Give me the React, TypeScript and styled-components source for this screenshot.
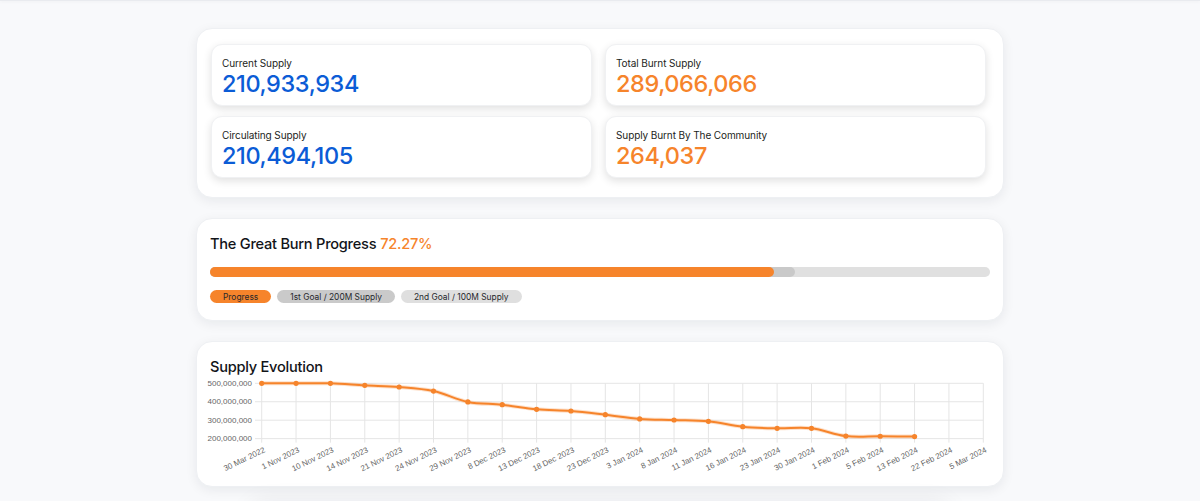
import React from "react";
import styled, { createGlobalStyle } from "styled-components";

const GlobalStyle = createGlobalStyle`
  body {
    margin: 0;
    background: #f8f9fb;
    font-family: Inter, "Noto Sans", "Liberation Sans", sans-serif;
    color: #16181d;
  }
`;

const ORANGE = "#f6842b";
const BLUE = "#0b5cd6";

const TopEdge = styled.div`
  height: 1px;
  background: #e9ebef;
  box-shadow: 0 1px 3px rgba(0, 0, 0, 0.06);
`;

const Page = styled.main`
  width: 808px;
  margin: 0 auto;
  padding-top: 27px;
  display: flex;
  flex-direction: column;
  gap: 20px;
`;

const Card = styled.section`
  background: #fff;
  border-radius: 16px;
  border: 1px solid #eef0f3;
  box-shadow: 0 3px 12px rgba(20, 24, 40, 0.07);
`;

const StatsCard = styled(Card)`
  padding: 15px 17px 19px 14px;
  display: grid;
  grid-template-columns: 1fr 1fr;
  gap: 10px 13px;
`;

const Stat = styled.div`
  background: #fff;
  border-radius: 11px;
  border: 1px solid #f0f1f3;
  box-shadow: 0 3px 9px rgba(0, 0, 0, 0.12);
  padding: 11px 10px 7px 10px;
`;

const StatLabel = styled.div`
  font-size: 10px;
  line-height: 14px;
  letter-spacing: -0.1px;
  color: #1c1e22;
`;

const StatValue = styled.div<{ $tone: "blue" | "orange" }>`
  font-size: 23.5px;
  line-height: 28px;
  font-weight: 500;
  letter-spacing: -0.4px;
  color: ${(p) => (p.$tone === "blue" ? BLUE : ORANGE)};
`;

const ProgressCard = styled(Card)`
  padding: 14px 13px 17px 13px;
`;

const Title = styled.h2`
  margin: 0;
  font-size: 14.6px;
  line-height: 22px;
  font-weight: 500;
  letter-spacing: -0.25px;
  color: #121419;
`;

const Percent = styled.span`
  color: ${ORANGE};
  margin-left: 4px;
`;

const Track = styled.div`
  margin-top: 12px;
  height: 10px;
  border-radius: 5px;
  background: #e0e0e0;
  display: flex;
  overflow: hidden;
`;

const Segment = styled.div<{ $color: string }>`
  height: 100%;
  background: ${(p) => p.$color};
  border-radius: 0 5px 5px 0;
`;

const Legend = styled.div`
  margin-top: 13px;
  display: flex;
  gap: 6px;
`;

const Pill = styled.span<{ $color: string }>`
  display: inline-flex;
  align-items: center;
  height: 13px;
  padding: 0 13px;
  border-radius: 7px;
  background: ${(p) => p.$color};
  font-size: 8.4px;
  color: #26282c;
`;

const ChartCard = styled(Card)`
  padding: 14px 13px 13px 13px;
`;

const ChartSvg = styled.svg`
  display: block;
  overflow: visible;
`;

const NextCard = styled(Card)`
  width: 700px;
  height: 120px;
  margin: 0 auto;
  box-shadow: 0 -4px 24px rgba(20, 24, 40, 0.08);
`;

const stats = [
  { label: "Current Supply", value: "210,933,934", tone: "blue" as const },
  { label: "Total Burnt Supply", value: "289,066,066", tone: "orange" as const },
  { label: "Circulating Supply", value: "210,494,105", tone: "blue" as const },
  { label: "Supply Burnt By The Community", value: "264,037", tone: "orange" as const },
];

const dates = [
  "30 Mar 2022", "1 Nov 2023", "10 Nov 2023", "14 Nov 2023", "21 Nov 2023",
  "24 Nov 2023", "29 Nov 2023", "8 Dec 2023", "13 Dec 2023", "18 Dec 2023",
  "23 Dec 2023", "3 Jan 2024", "8 Jan 2024", "11 Jan 2024", "16 Jan 2024",
  "23 Jan 2024", "30 Jan 2024", "1 Feb 2024", "5 Feb 2024", "13 Feb 2024",
  "22 Feb 2024", "5 Mar 2024",
];

// supply in millions per date (last dates have no reading yet)
const supply = [
  500, 500, 500, 489, 480, 458, 399, 384, 359, 350,
  330, 307, 301, 294, 265, 256, 256, 214, 213, 211,
];

const W = 780;
const H = 95;
const X0 = 51.7;
const X1 = 773.3;
const Y_TOP = 5.3;
const PX_PER_100M = 18.45;

const xAt = (i: number) => X0 + (i * (X1 - X0)) / (dates.length - 1);
const yAt = (v: number) => Y_TOP + ((500 - v) / 100) * PX_PER_100M;
const Y_BOTTOM = yAt(200);

const axisFont = {
  fontSize: 8,
  fontFamily: "'Liberation Sans', Arial, sans-serif",
  fill: "#666",
};

// cardinal spline through the points, same idea as chart.js line tension
function smoothPath(pts: [number, number][], t = 0.35) {
  let d = `M${pts[0][0]},${pts[0][1]}`;
  const ctrl = pts.map((p, i) => {
    const prev = pts[Math.max(0, i - 1)];
    const next = pts[Math.min(pts.length - 1, i + 1)];
    const d01 = Math.hypot(p[0] - prev[0], p[1] - prev[1]);
    const d12 = Math.hypot(next[0] - p[0], next[1] - p[1]);
    const sum = d01 + d12 || 1;
    const fa = (t * d01) / sum;
    const fb = (t * d12) / sum;
    return {
      before: [p[0] - fa * (next[0] - prev[0]), p[1] - fa * (next[1] - prev[1])],
      after: [p[0] + fb * (next[0] - prev[0]), p[1] + fb * (next[1] - prev[1])],
    };
  });
  for (let i = 1; i < pts.length; i++) {
    const a = ctrl[i - 1].after;
    const b = ctrl[i].before;
    d += ` C${a[0]},${a[1]} ${b[0]},${b[1]} ${pts[i][0]},${pts[i][1]}`;
  }
  return d;
}

const SupplyChart: React.FC = () => {
  const pts = supply.map((v, i) => [xAt(i), yAt(v)] as [number, number]);
  const line = smoothPath(pts);
  const ticks = [500, 400, 300, 200];
  return (
    <ChartSvg width={W} height={H} viewBox={`0 0 ${W} ${H}`}>
      {ticks.map((v) => (
        <g key={v}>
          <line x1={45} x2={X1} y1={yAt(v)} y2={yAt(v)} stroke="#e5e5e5" strokeWidth={1} />
          <text x={42} y={yAt(v)} textAnchor="end" dominantBaseline="central" {...axisFont}>
            {`${v},000,000`}
          </text>
        </g>
      ))}
      {dates.map((label, i) => (
        <g key={label}>
          <line x1={xAt(i)} x2={xAt(i)} y1={Y_TOP} y2={Y_BOTTOM + 4} stroke="#e5e5e5" strokeWidth={1} />
          <text
            transform={`translate(${xAt(i) + 1.5},${Y_BOTTOM + 8}) rotate(-26)`}
            textAnchor="end"
            dominantBaseline="hanging"
            {...axisFont}
          >
            {label}
          </text>
        </g>
      ))}
      <path d={line} fill="none" stroke="rgba(246,132,43,0.25)" strokeWidth={4} />
      <path d={line} fill="none" stroke={ORANGE} strokeWidth={2} />
      {pts.map(([x, y], i) => (
        <circle key={i} cx={x} cy={y} r={2.6} fill={ORANGE} />
      ))}
    </ChartSvg>
  );
};

const App: React.FC = () => {
  const progress = 72.27;
  const firstGoal = 75;
  return (
    <>
      <GlobalStyle />
      <TopEdge />
      <Page>
        <StatsCard>
          {stats.map((s) => (
            <Stat key={s.label}>
              <StatLabel>{s.label}</StatLabel>
              <StatValue $tone={s.tone}>{s.value}</StatValue>
            </Stat>
          ))}
        </StatsCard>

        <ProgressCard>
          <Title>
            The Great Burn Progress<Percent>{progress}%</Percent>
          </Title>
          <Track>
            <Segment $color="#c9c9c9" style={{ width: `${firstGoal}%` }}>
              <Segment $color={ORANGE} style={{ width: `${(progress / firstGoal) * 100}%` }} />
            </Segment>
          </Track>
          <Legend>
            <Pill $color={ORANGE}>Progress</Pill>
            <Pill $color="#cacaca">1st Goal / 200M Supply</Pill>
            <Pill $color="#dfdfdf">2nd Goal / 100M Supply</Pill>
          </Legend>
        </ProgressCard>

        <ChartCard>
          <Title>Supply Evolution</Title>
          <SupplyChart />
        </ChartCard>

        <NextCard />
      </Page>
    </>
  );
};

export default App;
